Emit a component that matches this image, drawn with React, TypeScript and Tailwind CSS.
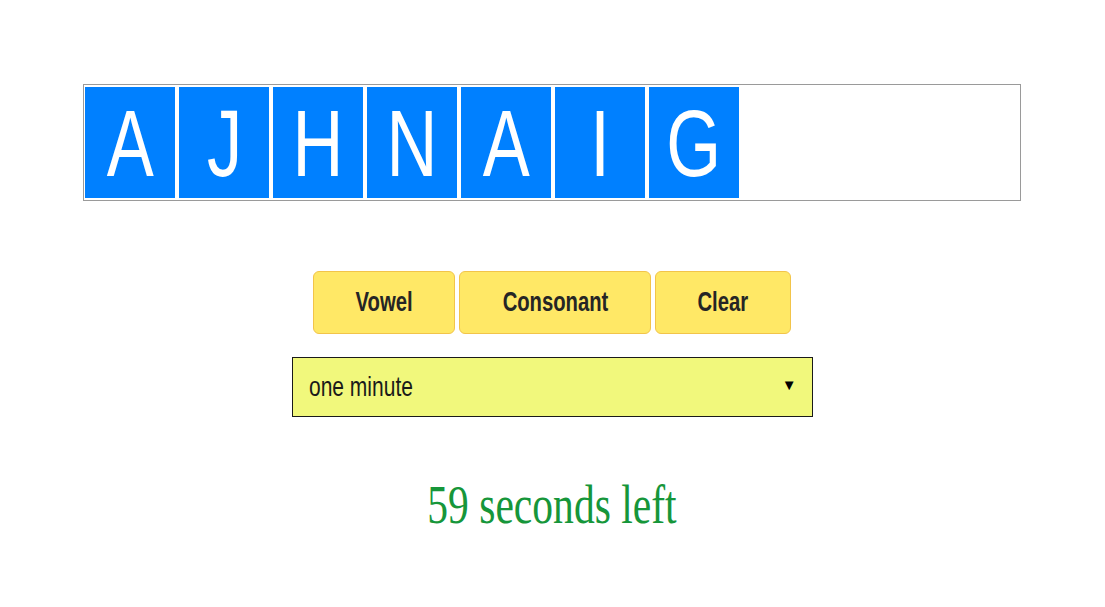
import { useState } from "react";

const letters = ["A", "J", "H", "N", "A", "I", "G"];

function App() {
  const [duration] = useState("one minute");

  return (
    <div className="min-h-screen bg-white flex flex-col items-center pt-[84px] pr-[1px] font-['Liberation_Sans',Arial,sans-serif]">
      {/* Letter board */}
      <div className="w-[938px] h-[117px] border border-[#9a9a9a] flex gap-[4px] px-[1px] py-[2px]">
        {letters.map((l, i) => (
          <div
            key={i}
            className="w-[90px] h-[111px] bg-[#0080ff] flex items-center justify-center text-white"
          >
            <span className="inline-block text-[94px] leading-none scale-x-[0.75] mt-[2px]">
              {l}
            </span>
          </div>
        ))}
      </div>

      {/* Controls */}
      <div className="mt-[70px] flex gap-[4px]">
        {[
          { label: "Vowel", w: "w-[142px]" },
          { label: "Consonant", w: "w-[192px]" },
          { label: "Clear", w: "w-[136px]" },
        ].map((b) => (
          <button
            key={b.label}
            className={`${b.w} h-[63px] rounded-[6px] bg-[#ffe866] border border-[#f2c44a] text-[#252525] font-bold flex items-center justify-center`}
          >
            <span className="inline-block text-[27px] leading-none scale-x-[0.75]">
              {b.label}
            </span>
          </button>
        ))}
      </div>

      <div
        role="combobox"
        className="mt-[23px] w-[521px] h-[60px] border border-[#1a1a1a] bg-[#f1f87c] flex items-center justify-between pl-[16px] pr-[15px]"
      >
        <span className="inline-block origin-left text-[28px] leading-none text-[#1a1a1a] scale-x-[0.75]">
          {duration}
        </span>
        <span className="inline-block text-[15px] leading-none text-black -mt-[6px]">
          ▼
        </span>
      </div>

      <div className="mt-[61px] text-[#16963a] font-['Liberation_Serif','Times_New_Roman',serif]">
        <span className="inline-block text-[54px] leading-none scale-x-[0.77]">
          59 seconds left
        </span>
      </div>
    </div>
  );
}

export default App;
